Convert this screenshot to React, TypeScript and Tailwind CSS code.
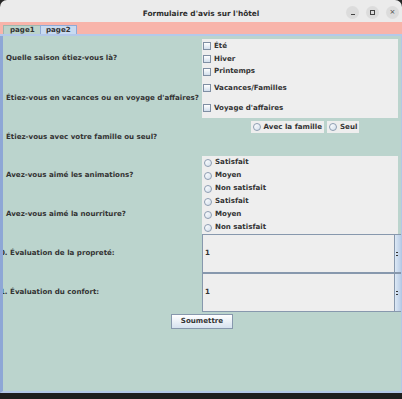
import React from 'react'

const font = "font-['DejaVu_Sans',sans-serif]"

function CheckBox({ label }: { label: string }) {
  return (
    <div className="flex items-center gap-[3px] pl-[1px]">
      <span className="w-[8px] h-[8px] border border-[#7f8fa3] bg-gradient-to-b from-white to-[#d3dfec]" />
      <span>{label}</span>
    </div>
  )
}

function Radio({ label }: { label: string }) {
  return (
    <div className="flex items-center gap-[3px] pl-[2px]">
      <span className="w-[8px] h-[8px] rounded-full border border-[#8d9db2] bg-gradient-to-br from-white to-[#d3dfec]" />
      <span>{label}</span>
    </div>
  )
}

function Spinner() {
  return (
    <div className="flex h-full">
      <div className="flex-1 flex items-center pl-[2px] border border-[#8798ad] bg-[#eeeeee]">
        1
      </div>
      <div className="w-[6px] flex flex-col border-y border-[#8798ad]">
        <div className="flex-1 bg-gradient-to-r from-[#dce8f5] to-[#b9cde6] flex items-end pl-[1px] pb-[1px]">
          <span className="w-[2px] h-[1px] bg-[#333]" />
        </div>
        <div className="flex-1 bg-gradient-to-r from-[#dce8f5] to-[#b9cde6] flex items-start pl-[1px] pt-[1px]">
          <span className="w-[2px] h-[1px] bg-[#333]" />
        </div>
      </div>
    </div>
  )
}

export default function App() {
  return (
    <div className={`w-[402px] h-[399px] bg-[#262626] overflow-hidden ${font}`}>
      <div className="h-[393px] flex flex-col rounded-t-[7px] overflow-hidden bg-[#ebebeb]">
        {/* title bar */}
        <div className="h-[22px] relative flex items-center justify-center">
          <span className="text-[7.4px] font-bold text-[#2e2e2e] pt-[5px]">
            Formulaire d'avis sur l'hôtel
          </span>
          <div className="absolute right-[3px] top-[6px] flex gap-[7px]">
            <span className="w-[13px] h-[13px] rounded-full bg-[#dcdcdc] flex items-center justify-center">
              <span className="w-[4px] h-[1px] bg-[#444] mt-[3px]" />
            </span>
            <span className="w-[13px] h-[13px] rounded-full bg-[#dcdcdc] flex items-center justify-center">
              <span className="w-[5px] h-[5px] border border-[#444]" />
            </span>
            <span className="w-[13px] h-[13px] rounded-full bg-[#dcdcdc] flex items-center justify-center text-[7px] leading-none text-[#444]">
              ×
            </span>
          </div>
        </div>

        {/* tab strip */}
        <div className="h-[12px] bg-[#f8b4aa] flex items-end pl-[3px] text-[7.1px] font-bold text-[#333]">
          <div className="h-[9px] w-[37px] flex items-center pl-[6px] pt-[1px] bg-[#bcd3cb] border-t border-l border-[#9fb7ae]">
            page1
          </div>
          <div className="h-[9px] w-[37px] flex items-center pl-[5px] pt-[1px] bg-[#c8daf0] border-t border-x border-[#8fa9d6]">
            page2
          </div>
        </div>
        <div className="h-[2px] bg-[#b4c9ea]" />

        {/* content */}
        <div className="flex-1 flex flex-col bg-[#bbd4cd] border-l-[3px] border-r border-b-2 border-l-[#8ea7d6] border-r-[#b3c7e8] border-b-[#b3c7e8] overflow-hidden text-[7.1px] font-bold text-[#333] pt-[3px]">
          <div className="grid grid-cols-[199px_1fr] grid-rows-[39px_40px_38px_39px_39px_39px_39px]">
            <div className="flex items-center pl-[3px]">Quelle saison étiez-vous là?</div>
            <div className="bg-[#eeeeee] mr-[3px] flex flex-col pt-[1px] [&>*]:h-[13px]">
              <CheckBox label="Été" />
              <CheckBox label="Hiver" />
              <CheckBox label="Printemps" />
            </div>

            <div className="flex items-center pl-[3px] whitespace-nowrap">
              Étiez-vous en vacances ou en voyage d'affaires?
            </div>
            <div className="bg-[#eeeeee] mr-[3px] grid grid-rows-2">
              <CheckBox label="Vacances/Familles" />
              <CheckBox label="Voyage d'affaires" />
            </div>

            <div className="flex items-center pl-[3px]">Étiez-vous avec votre famille ou seul?</div>
            <div className="flex justify-center items-start pt-[3px] pl-[7px] gap-[3px]">
              <div className="h-[12px] flex items-center bg-[#eeeeee] pr-[2px]">
                <Radio label="Avec la famille" />
              </div>
              <div className="h-[12px] flex items-center bg-[#eeeeee] pr-[2px]">
                <Radio label="Seul" />
              </div>
            </div>

            <div className="flex items-center pl-[3px]">Avez-vous aimé les animations?</div>
            <div className="bg-[#eeeeee] mr-[3px] flex flex-col [&>*]:h-[13px]">
              <Radio label="Satisfait" />
              <Radio label="Moyen" />
              <Radio label="Non satisfait" />
            </div>

            <div className="flex items-center pl-[3px]">Avez-vous aimé la nourriture?</div>
            <div className="bg-[#eeeeee] mr-[3px] flex flex-col [&>*]:h-[13px]">
              <Radio label="Satisfait" />
              <Radio label="Moyen" />
              <Radio label="Non satisfait" />
            </div>

            <div className="flex items-center whitespace-nowrap ml-[-8px]">
              10. Évaluation de la propreté:
            </div>
            <Spinner />

            <div className="flex items-center whitespace-nowrap ml-[-8px]">
              11. Évaluation du confort:
            </div>
            <Spinner />
          </div>

          <div className="flex justify-center pt-[2px]">
            <button className="h-[15px] w-[62px] flex items-center justify-center border border-[#8798ad] bg-gradient-to-b from-white to-[#d6e2ef] text-[7.1px] font-bold text-[#333]">
              Soumettre
            </button>
          </div>
        </div>
      </div>
      <div className="h-[6px] bg-[#1e1e1e]" />
    </div>
  )
}
